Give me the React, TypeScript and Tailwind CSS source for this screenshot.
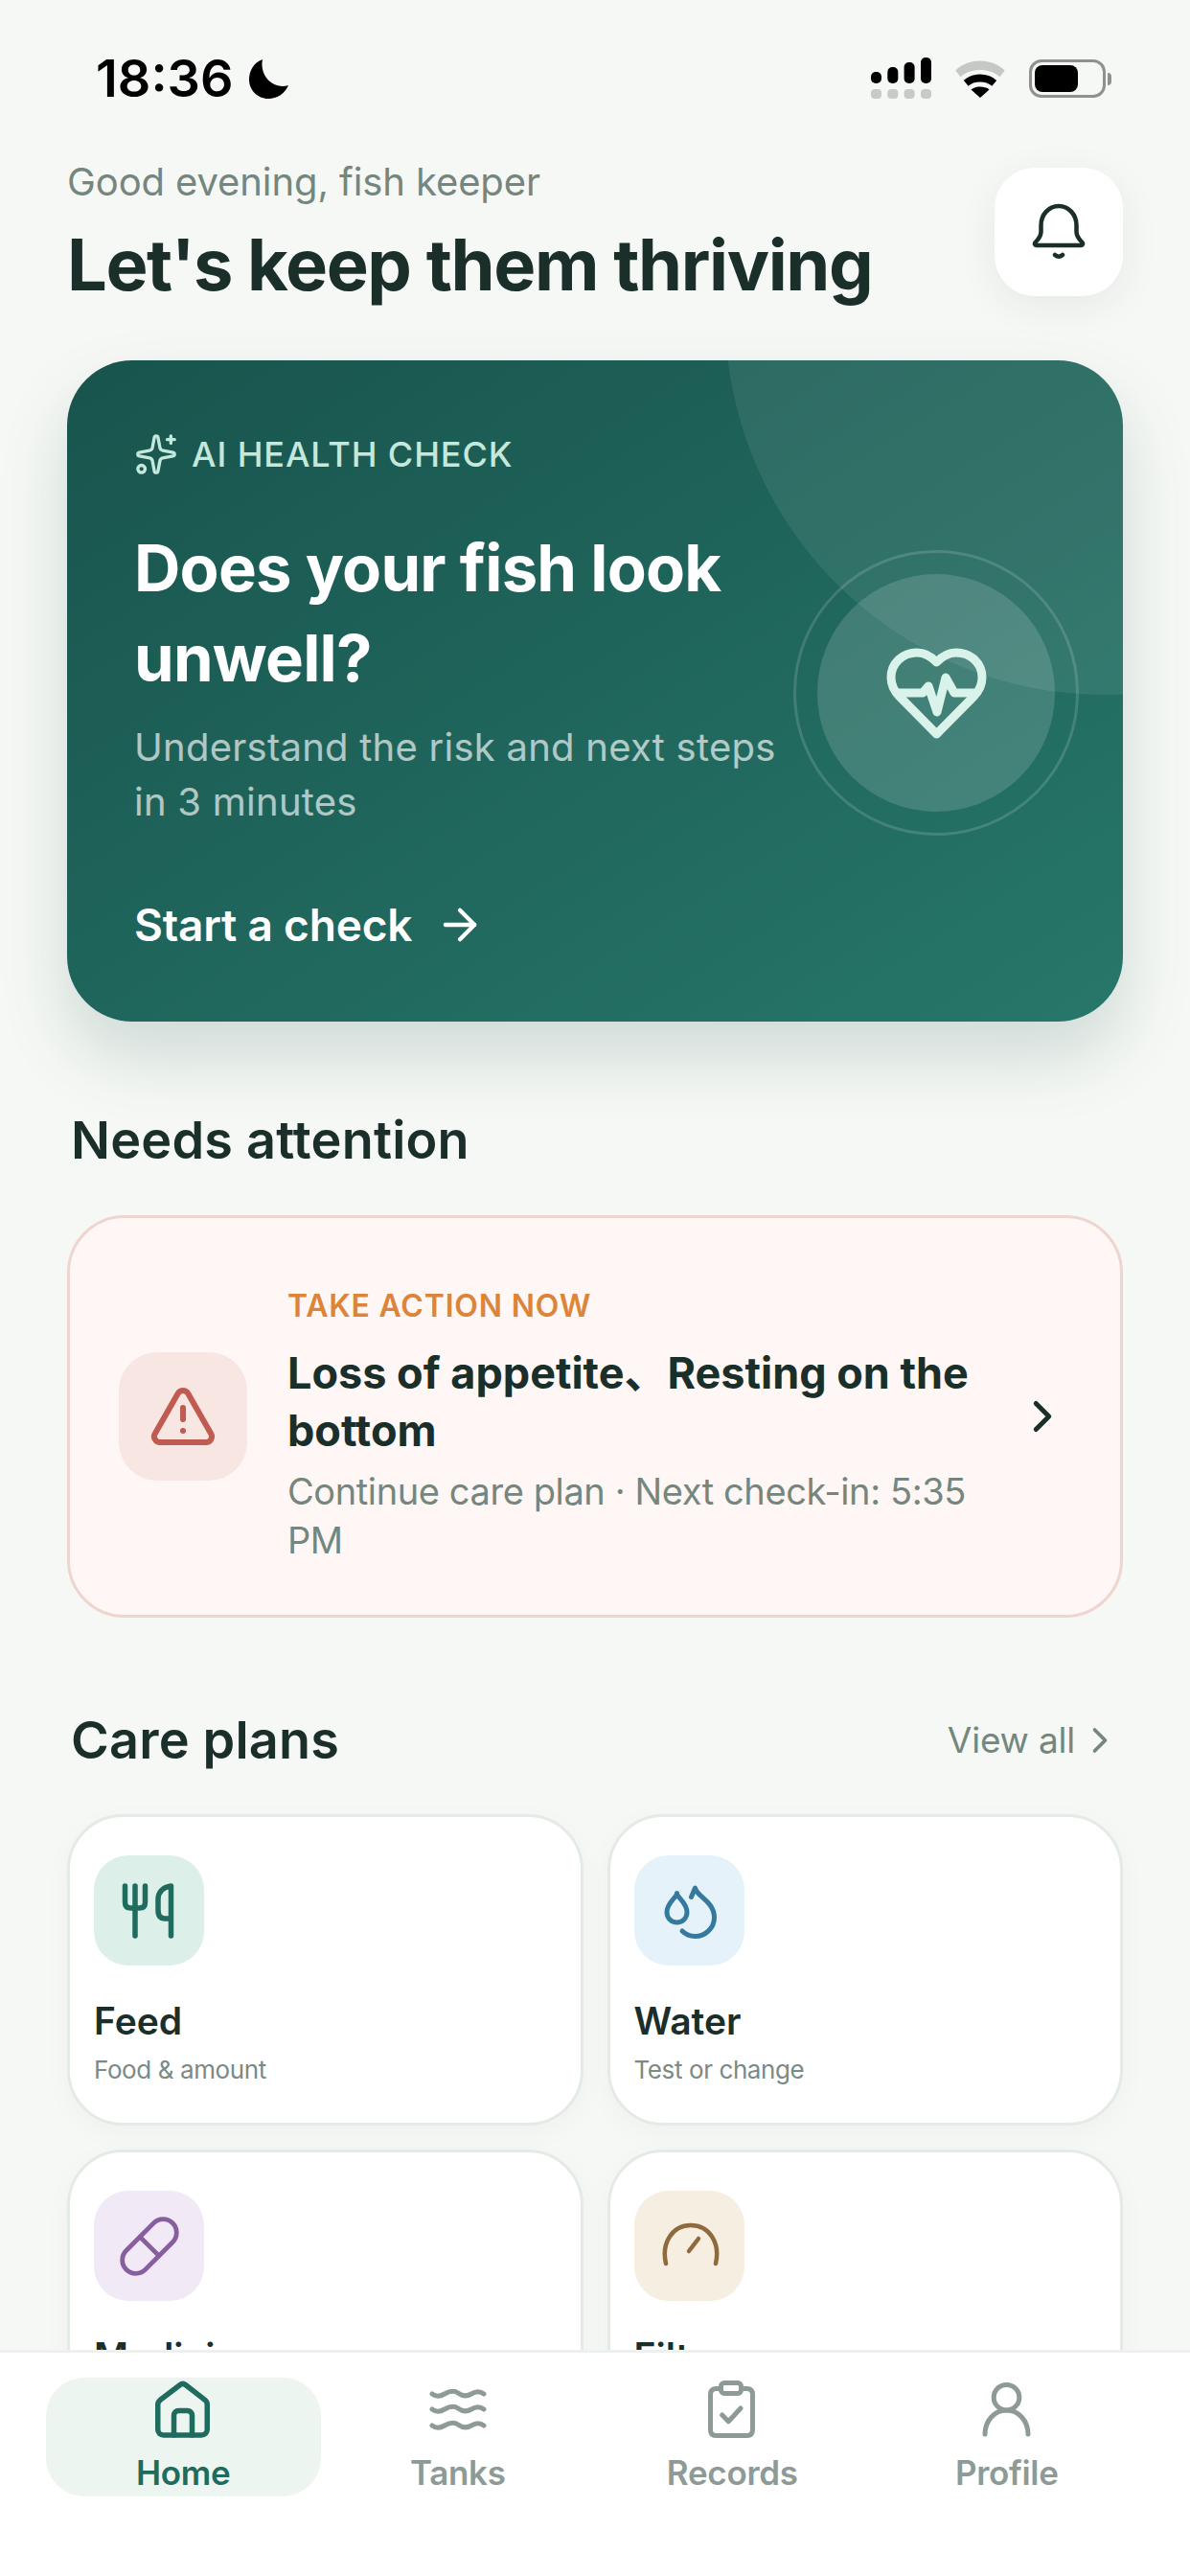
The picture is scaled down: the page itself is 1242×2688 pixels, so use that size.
import { ArrowRight, ChevronRight, Pill, Sparkles, TriangleAlert } from "lucide-react";
import type { ReactNode } from "react";

const plans = [
  { title: "Feed", sub: "Food & amount", box: "bg-[#dcefe8]", icon: <ForkKnife /> },
  { title: "Water", sub: "Test or change", box: "bg-[#e6f2f9]", icon: <Drops /> },
  { title: "Medicine", sub: "Dose & timing", box: "bg-[#f1e9f6]", icon: <Pill size={68} strokeWidth={1.7} className="text-[#875f9f]" /> },
  { title: "Filter", sub: "Clean or replace", box: "bg-[#f6eee0]", icon: <Dial /> },
];

const tabs = [
  { label: "Home", icon: <HomeIcon />, active: true },
  { label: "Tanks", icon: <WavesIcon />, active: false },
  { label: "Records", icon: <ClipboardIcon />, active: false },
  { label: "Profile", icon: <ProfileIcon />, active: false },
];

function ForkKnife() {
  return (
    <svg width="64" height="64" viewBox="0 0 64 64" fill="none" stroke="#1f6b5e" strokeWidth="5.500" strokeLinecap="round" strokeLinejoin="round">
      <path d="M6.500 6v17q0 6 6 6h9q6 0 6-6V6M17 6v52" />
      <path d="M54.500 58V6c-8 1-13.500 6-13.500 14v11q0 9 7 9h6.500" />
    </svg>
  );
}

function Drops() {
  return (
    <svg width="64" height="64" viewBox="0 0 64 64" fill="none" stroke="#35799c" strokeWidth="5" strokeLinecap="round" strokeLinejoin="round">
      <path d="M19.500 13.500C19.500 18 9 23 9 33.500a10.500 10.500 0 0 0 21 0C30 23 19.500 18 19.500 13.500z" />
      <path d="M34.500 17.500L38.500 8C40 17 58.500 22 58.500 39 58.500 50 49 58.500 38.500 58.500 33 58.500 28 56 25 53" />
    </svg>
  );
}

function Dial() {
  return (
    <svg width="64" height="64" viewBox="0 0 64 64" fill="none" stroke="#8f6a3c" strokeWidth="4.500" strokeLinecap="round">
      <path d="M8 50C3 28 15 10 34 10s31 18 26 40" />
      <path d="M32 37l10-13" />
    </svg>
  );
}

function HomeIcon() {
  return (
    <svg width="60" height="62" viewBox="0 0 60 62" fill="none" stroke="currentColor" strokeWidth="5.500" strokeLinecap="round" strokeLinejoin="round">
      <path d="M3.750 26c0-2 1-3.500 2.500-4.700L27 5.500c1.800-1.400 3.800-1.400 5.600 0L53 21.300c1.500 1.200 2.250 2.700 2.250 4.700V52c0 3.500-2.500 6-6 6H9.750c-3.500 0-6-2.500-6-6z" />
      <path d="M20.500 58V38c0-3.500 2-5.500 5-5.500h9c3 0 5 2 5 5.500v20" />
    </svg>
  );
}

function WavesIcon() {
  return (
    <svg width="60" height="44" viewBox="0 0 60 44" fill="none" stroke="currentColor" strokeWidth="5" strokeLinecap="round">
      <path d="M3 6c4 3 8 3 13 0s10-4 14-1 9 4 14 1 9-3 13 0" />
      <path d="M3 22c4 3 8 3 13 0s10-4 14-1 9 4 14 1 9-3 13 0" />
      <path d="M3 39c4 3 8 3 13 0s10-4 14-1 9 4 14 1 9-3 13 0" />
    </svg>
  );
}

function ClipboardIcon() {
  return (
    <svg width="54" height="64" viewBox="0 0 54 64" fill="none" stroke="currentColor" strokeWidth="5" strokeLinecap="round" strokeLinejoin="round">
      <path d="M15.500 10.500h-5q-6 0-6 6v37q0 6 6 6h32q6 0 6-6v-37q0-6-6-6h-6" />
      <rect x="15.500" y="4.500" width="21" height="11" rx="3.500" />
      <path d="M16.700 38l6.600 6.700L36 31" />
    </svg>
  );
}

function ProfileIcon() {
  return (
    <svg width="54" height="60" viewBox="0 0 54 60" fill="none" stroke="currentColor" strokeWidth="5" strokeLinecap="round">
      <circle cx="26.500" cy="17.700" r="13.300" />
      <path d="M4 56c0-14 10-25 22.500-25S49 42 49 56" />
    </svg>
  );
}

function HeartLine() {
  return (
    <svg width="105" height="95" viewBox="0 0 105 95" fill="none" stroke="#d9f2ea" strokeWidth="9" strokeLinecap="round" strokeLinejoin="round">
      <path d="M52.500 15C45 7 38 5 32 5 17 5 5 16 5 31c0 9 4 15 9 20l38.500 39L91 51c5-5 9-11 9-20 0-15-12-26-27-26-6 0-13 2-20.500 10z" />
      <path d="M12 47h26l6-7 9 27 9-36 9 16h22" />
    </svg>
  );
}

function BellLine() {
  return (
    <svg width="60" height="60" viewBox="0 0 60 60" fill="none" stroke="#1a2e2a" strokeWidth="4.500" strokeLinecap="round" strokeLinejoin="round">
      <path d="M5.500 41c3-3 6-6 6-11v-7C11.500 12 19.500 3 30 3s18.500 9 18.500 20v7c0 5 3 8 6 11 1 1.500 .5 3-1 3h-47c-1.500 0-2-1.500-1-3z" />
      <path d="M26 54q4 3.500 8 0" />
    </svg>
  );
}

function StatusIcons() {
  return (
    <div className="flex items-start gap-[24px] pt-[6px]">
      <svg width="63" height="43" viewBox="0 0 63 43" fill="#000">
        <rect x="0" y="15" width="11" height="12" rx="5" />
        <rect x="17.300" y="10" width="11" height="17" rx="5" />
        <rect x="34.600" y="5" width="11" height="22" rx="5" />
        <rect x="52" y="0" width="11" height="27" rx="5" />
        <g fill="#c8cac6">
          <rect x="0" y="33" width="11" height="10" rx="4" />
          <rect x="17.300" y="33" width="11" height="10" rx="4" />
          <rect x="34.600" y="33" width="11" height="10" rx="4" />
          <rect x="52" y="33" width="11" height="10" rx="4" />
        </g>
      </svg>
      <svg width="54" height="40" viewBox="0 0 54 42" className="mt-[3px]">
        <path d="M0 11C14-3 40-3 54 11l-5.500 7C37 8 17 8 5.500 18z" fill="#c6c8c4" />
        <path d="M9 22c10-9 26-9 36 0l-5 6c-7-6-19-6-26 0z" fill="#000" />
        <path d="M17 32c5-4 15-4 20 0L27 41z" fill="#000" />
      </svg>
      <div className="mt-[2px] flex items-center gap-[2px]">
        <div className="flex h-[40px] w-[80px] items-center rounded-[13px] border-[3px] border-[#8f918e] p-[3px]">
          <div className="h-full w-[45px] rounded-[8px] bg-black" />
        </div>
        <div className="h-[13px] w-[4px] rounded-r-full bg-[#8f918e]" />
      </div>
    </div>
  );
}

function Heading({ children }: { children: ReactNode }) {
  return <h2 className="pl-1 text-[54px] leading-[60px] font-semibold tracking-[0.2px] text-[#1a2e2a]">{children}</h2>;
}

export default function App() {
  return (
    <div className="relative h-[2688px] w-[1242px] overflow-hidden bg-[#f6f8f5] font-['Inter','Noto_Sans_CJK_SC',sans-serif]">
      <div className="flex h-[168px] items-start justify-between pt-[54px] pr-[82px] pl-[100px]">
        <div className="flex items-center gap-[16px]">
          <span className="text-[54px] leading-[56px] font-semibold text-black">18:36</span>
          <svg width="41" height="41" viewBox="0 0 41 41" fill="#000">
            <path d="M14 0C5 3 0 12 0 21c0 11 9 20 20 20 9 0 17-5 21-14-2 .6-4 1-6 1C21 28 11 14 14 0z" />
          </svg>
        </div>
        <StatusIcons />
      </div>

      <div className="px-[70px]">
        <header className="flex items-start justify-between">
          <div>
            <p className="text-[40px] leading-[44px] tracking-[-0.1px] text-[#75867f]">Good evening, fish keeper</p>
            <h1 className="mt-[18px] text-[74px] leading-[92px] font-bold tracking-[-1.4px] text-[#1a2e2a]">Let's keep them thriving</h1>
          </div>
          <button type="button" className="mt-[7px] flex h-[134px] w-[134px] items-center justify-center rounded-[42px] bg-white shadow-[0_10px_40px_rgba(26,46,42,0.07)]">
            <BellLine />
          </button>
        </header>

        <section className="relative mt-[54px] h-[690px] overflow-hidden rounded-[68px] bg-gradient-to-br from-[#18544d] to-[#27776a] pt-[70px] pl-[70px] shadow-[0_36px_70px_rgba(27,87,80,0.18)]">
          <div className="absolute top-[-443px] left-[687px] h-[792px] w-[792px] rounded-full bg-white/[0.08]" />
          <div className="absolute top-[198px] left-[758px] flex h-[298px] w-[298px] items-center justify-center rounded-full border-[3px] border-white/15">
            <div className="flex h-[248px] w-[248px] items-center justify-center rounded-full bg-white/15">
              <HeartLine />
            </div>
          </div>
          <div className="relative">
            <div className="flex items-center gap-[14px] text-[#c4e8dc]">
              <Sparkles size={46} strokeWidth={1.75} />
              <span className="text-[36px] leading-[56px] font-medium tracking-[0.9px]">AI HEALTH CHECK</span>
            </div>
            <h2 className="mt-[44px] w-[640px] text-[67px] leading-[94px] font-bold tracking-[-0.8px] text-white">Does your fish look unwell?</h2>
            <p className="mt-[17px] w-[680px] text-[40px] leading-[57px] tracking-[0.25px] text-white/65">Understand the risk and next steps in 3 minutes</p>
            <div className="mt-[70px] flex items-center gap-[24px] text-white">
              <span className="text-[46px] leading-[60px] font-semibold tracking-[-0.2px]">Start a check</span>
              <ArrowRight size={52} strokeWidth={2} />
            </div>
          </div>
        </section>

        <section className="mt-[94px]">
          <Heading>Needs attention</Heading>
          <div className="mt-[48px] flex h-[420px] items-center rounded-[60px] border-[3px] border-[#eed5cf] bg-[#fff7f5] pr-[54px] pl-[51px]">
            <div className="flex h-[134px] w-[134px] shrink-0 items-center justify-center rounded-[40px] bg-[#f7e6e2]">
              <TriangleAlert size={72} strokeWidth={2} className="text-[#bf5b50]" />
            </div>
            <div className="ml-[42px] min-w-0 flex-1 pt-[18px]">
              <p className="text-[32px] leading-[44px] font-semibold tracking-[0.8px] text-[#dc8538]">TAKE ACTION NOW</p>
              <p className="mt-[18px] text-[45px] leading-[60px] font-bold tracking-[0px] text-[#1a2e2a]">Loss of appetite、Resting on the bottom</p>
              <p className="mt-[8px] text-[38px] leading-[51px] tracking-[-0.4px] text-[#75867f]">Continue care plan · Next check-in: 5:35 PM</p>
            </div>
            <ChevronRight size={54} strokeWidth={2.2} className="ml-[20px] shrink-0 text-[#1a2e2a]" />
          </div>
        </section>

        <section className="mt-[98px]">
          <div className="flex items-center justify-between">
            <Heading>Care plans</Heading>
            <div className="flex items-center gap-[4px] pr-[2px] text-[#75867f]">
              <span className="text-[37px] leading-[44px] tracking-[-0.2px]">View all</span>
              <ChevronRight size={44} strokeWidth={2} />
            </div>
          </div>
          <div className="mt-[47px] grid grid-cols-2 gap-[25px]">
            {plans.map((plan) => (
              <div key={plan.title} className="h-[325px] rounded-[58px] border-[3px] border-[#e4eae6] bg-white pt-[40px] pl-[25px] shadow-[0_8px_30px_rgba(26,46,42,0.03)]">
                <div className={`flex h-[115px] w-[115px] items-center justify-center rounded-[36px] ${plan.box}`}>{plan.icon}</div>
                <p className="mt-[36px] text-[39px] leading-[44px] font-semibold text-[#1a2e2a]">{plan.title}</p>
                <p className="mt-[12px] text-[26px] leading-[34px] tracking-[-0.4px] text-[#7a8a84]">{plan.sub}</p>
              </div>
            ))}
          </div>
        </section>
      </div>

      <nav className="absolute right-0 bottom-0 left-0 grid h-[236px] grid-cols-4 items-start border-t-[3px] border-[#eef0ee] bg-white px-[48px] pt-[26px]">
        {tabs.map((tab) => (
          <div key={tab.label} className={tab.active ? "flex h-[124px] flex-col items-center rounded-[40px] bg-[#edf5f0] text-[#1f6b5e]" : "flex h-[124px] flex-col items-center text-[#8d9a95]"}>
            <div className="flex h-[66px] items-center justify-center">{tab.icon}</div>
            <span className="mt-[10px] text-[35px] leading-[46px] font-semibold tracking-[-0.3px]">{tab.label}</span>
          </div>
        ))}
      </nav>
    </div>
  );
}
